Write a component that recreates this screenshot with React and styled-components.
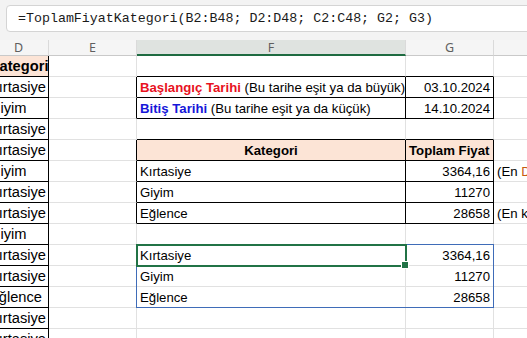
import React from "react";
import styled, { createGlobalStyle } from "styled-components";

const Global = createGlobalStyle`
  html, body {
    margin: 0;
    padding: 0;
    background: #ffffff;
    overflow: hidden;
    font-family: "Liberation Sans", Arial, sans-serif;
  }
`;

const GRID = "#e1e1e1";
const BLACK = "#000000";

const Page = styled.div`
  width: 527px;
  height: 338px;
  overflow: hidden;
  background: #fff;
`;

const FormulaArea = styled.div`
  height: 40px;
  background: #f3f3f3;
  display: flex;
  align-items: flex-start;
  gap: 4px;
  padding-top: 5px;
  box-sizing: border-box;
  margin-left: -24px;
`;

const NameBtn = styled.div`
  width: 24px;
  height: 27px;
  box-sizing: border-box;
  background: #fff;
  border: 1px solid #d4d4d4;
  border-radius: 4px;
  display: flex;
  align-items: center;
  justify-content: flex-end;
  padding-right: 1px;
`;

const FormulaBox = styled.div`
  flex: 1;
  height: 27px;
  box-sizing: border-box;
  background: #fff;
  border: 1px solid #d4d4d4;
  border-radius: 4px;
  margin-left: 2px;
  margin-right: -10px;
  display: flex;
  align-items: center;
  padding-left: 11px;
  font-family: "Liberation Mono", "DejaVu Sans Mono", monospace;
  font-size: 13.3px;
  color: #1a1a1a;
  white-space: nowrap;
`;

/* the sheet is scrolled: column D starts left of the window */
const Sheet = styled.div`
  position: relative;
  display: grid;
  grid-template-columns: 60px 88px 269px 88px 120px;
  grid-template-rows: 16px repeat(14, 21px);
  margin-left: -11px;
  width: max-content;
`;

const ColHead = styled.div`
  box-sizing: border-box;
  background: ${(p) => (p.$active ? "#dfe3e0" : "#f5f5f5")};
  border-right: 1px solid #dadada;
  border-bottom: ${(p) => (p.$active ? "2px solid #1e6b41" : "1px solid #c9c9c9")};
  font-family: "Noto Sans", "Open Sans", sans-serif;
  font-size: 12.5px;
  line-height: 15px;
  color: #5f5f5f;
  text-align: center;
  overflow: hidden;
`;

const Cell = styled.div`
  box-sizing: border-box;
  border-right: 1px solid ${(p) => p.$r || GRID};
  border-bottom: 1px solid ${(p) => p.$b || GRID};
  background: ${(p) => p.$bg || "transparent"};
  font-size: 13.2px;
  font-weight: ${(p) => (p.$bold ? 700 : 400)};
  text-align: ${(p) => p.$align || "left"};
  padding: 1px 3px 0;
  line-height: 20px;
  white-space: nowrap;
  overflow: ${(p) => (p.$spill ? "visible" : "hidden")};
  color: #000;
`;

const DCell = styled(Cell)`
  font-size: 14.67px;
  padding: 0;
  line-height: 21px;
`;

const Red = styled.span`
  color: #e8121f;
  font-weight: 700;
`;

const Blue = styled.span`
  color: #1616d9;
  font-weight: 700;
`;

const Note = styled.span`
  color: #c55a11;
`;

const RangeBox = styled.div`
  position: absolute;
  grid-column: 3 / 5;
  grid-row: 11 / 14;
  top: -1px;
  left: -1px;
  right: 0;
  bottom: 0;
  border: 1px solid #3f6cb8;
  pointer-events: none;
`;

const ActiveCell = styled.div`
  position: absolute;
  grid-column: 3 / 4;
  grid-row: 11 / 12;
  top: -1px;
  left: -1px;
  right: -1px;
  bottom: -1px;
  border: 2px solid #217346;
  pointer-events: none;
`;

const FillHandle = styled.div`
  position: absolute;
  right: -4px;
  bottom: -4px;
  width: 6px;
  height: 6px;
  background: #217346;
  border: 1px solid #fff;
`;

const dValues = [
  "Kırtasiye", "Giyim", "Kırtasiye", "Kırtasiye", "Giyim", "Kırtasiye",
  "Kırtasiye", "Giyim", "Kırtasiye", "Kırtasiye", "Eğlence", "Kırtasiye", "Kırtasiye",
];

const summary = [
  { name: "Kırtasiye", total: "3364,16", note: <>(En <Note>Düşük)</Note></> },
  { name: "Giyim", total: "11270" },
  { name: "Eğlence", total: "28658", note: "(En kârlı)" },
];

function Chevron() {
  return (
    <svg width="8" height="8" viewBox="0 0 8 8">
      <path d="M1 2.5 L4 5.5 L7 2.5" fill="none" stroke="#555" strokeWidth="1" />
    </svg>
  );
}

export default function App() {
  const rows = [];

  rows.push(
    <React.Fragment key="r1">
      <DCell $r={BLACK} $b={BLACK} $bg="#fce4d6" $bold>Kategori</DCell>
      <Cell />
      <Cell $b={BLACK} />
      <Cell $b={BLACK} />
      <Cell />
    </React.Fragment>
  );

  rows.push(
    <React.Fragment key="r2">
      <DCell $r={BLACK} $b={BLACK}>{dValues[0]}</DCell>
      <Cell $r={BLACK} />
      <Cell $r={BLACK} $b={BLACK}><Red>Başlangıç Tarihi</Red> (Bu tarihe eşit ya da büyük)</Cell>
      <Cell $r={BLACK} $b={BLACK} $align="right">03.10.2024</Cell>
      <Cell />
    </React.Fragment>,
    <React.Fragment key="r3">
      <DCell $r={BLACK} $b={BLACK}>{dValues[1]}</DCell>
      <Cell $r={BLACK} />
      <Cell $r={BLACK} $b={BLACK}><Blue>Bitiş Tarihi</Blue> (Bu tarihe eşit ya da küçük)</Cell>
      <Cell $r={BLACK} $b={BLACK} $align="right">14.10.2024</Cell>
      <Cell />
    </React.Fragment>
  );

  rows.push(
    <React.Fragment key="r4">
      <DCell $r={BLACK} $b={BLACK}>{dValues[2]}</DCell>
      <Cell />
      <Cell $b={BLACK} />
      <Cell $b={BLACK} />
      <Cell />
    </React.Fragment>
  );

  rows.push(
    <React.Fragment key="r5">
      <DCell $r={BLACK} $b={BLACK}>{dValues[3]}</DCell>
      <Cell $r={BLACK} />
      <Cell $r={BLACK} $b={BLACK} $bg="#fce4d6" $bold $align="center">Kategori</Cell>
      <Cell $r={BLACK} $b={BLACK} $bg="#fce4d6" $bold>Toplam Fiyat</Cell>
      <Cell />
    </React.Fragment>
  );

  summary.forEach((s, i) => {
    rows.push(
      <React.Fragment key={"s" + i}>
        <DCell $r={BLACK} $b={BLACK}>{dValues[4 + i]}</DCell>
        <Cell $r={BLACK} />
        <Cell $r={BLACK} $b={BLACK}>{s.name}</Cell>
        <Cell $r={BLACK} $b={BLACK} $align="right">{s.total}</Cell>
        <Cell $spill>{s.note}</Cell>
      </React.Fragment>
    );
  });

  rows.push(
    <React.Fragment key="r9">
      <DCell $r={BLACK} $b={BLACK}>{dValues[7]}</DCell>
      <Cell />
      <Cell />
      <Cell />
      <Cell />
    </React.Fragment>
  );

  summary.forEach((s, i) => {
    rows.push(
      <React.Fragment key={"c" + i}>
        <DCell $r={BLACK} $b={BLACK}>{dValues[8 + i]}</DCell>
        <Cell />
        <Cell>{s.name}</Cell>
        <Cell $align="right">{s.total}</Cell>
        <Cell />
      </React.Fragment>
    );
  });

  [11, 12].forEach((k) => {
    rows.push(
      <React.Fragment key={"t" + k}>
        <DCell $r={BLACK} $b={BLACK}>{dValues[k]}</DCell>
        <Cell />
        <Cell />
        <Cell />
        <Cell />
      </React.Fragment>
    );
  });

  return (
    <Page>
      <Global />
      <FormulaArea>
        <NameBtn><Chevron /></NameBtn>
        <FormulaBox>=ToplamFiyatKategori(B2:B48; D2:D48; C2:C48; G2; G3)</FormulaBox>
      </FormulaArea>
      <Sheet>
        <ColHead>D</ColHead>
        <ColHead>E</ColHead>
        <ColHead $active>F</ColHead>
        <ColHead>G</ColHead>
        <ColHead />
        {rows}
        <RangeBox />
        <ActiveCell>
          <FillHandle />
        </ActiveCell>
      </Sheet>
    </Page>
  );
}
